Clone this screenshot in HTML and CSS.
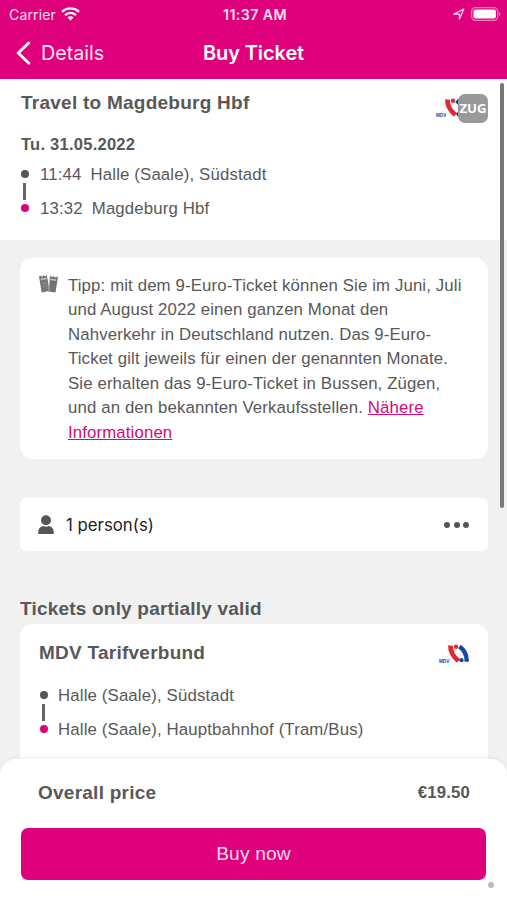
FILE: index.html
```html
<!DOCTYPE html>
<html lang="en">
<head>
<meta charset="utf-8">
<title>Buy Ticket</title>
<link rel="stylesheet" href="styles.css">
</head>
<body>
<div class="app">
  <header class="header">
    <div class="status">
      <div class="carrier"><span>Carrier</span>
        <svg width="19" height="14" viewBox="0 0 19 14" fill="none" stroke="#fff" stroke-width="2.3"><path d="M1.1 4.9a12 12 0 0 1 16.8 0M4.1 8.1a7.7 7.7 0 0 1 10.8 0"/><path d="M6.5 10.5a4.2 4.2 0 0 1 6 0l-3 3z" fill="#fff" stroke="none"/></svg>
      </div>
      <div class="clock">11:37 AM</div>
      <div class="indicators">
        <svg width="12" height="12" viewBox="0 0 12 12" fill="none" stroke="#ffd5ef" stroke-width="1.3" stroke-linejoin="round"><path d="M.9 6.2 10.8 1 6.5 11V6.2z"/></svg>
        <svg width="30" height="14" viewBox="0 0 30 14"><rect x=".7" y=".7" width="26" height="12.6" rx="3.6" fill="none" stroke="#f47fc0" stroke-width="1.2"/><rect x="2.5" y="2.5" width="22.4" height="9" rx="2" fill="#fff"/><path d="M28 4.6q2.6 2.4 0 4.8z" fill="#f47fc0"/></svg>
      </div>
    </div>
    <nav class="navbar">
      <a class="back"><svg width="15" height="24" viewBox="0 0 15 24" fill="none" stroke="#fff" stroke-width="3" stroke-linecap="round" stroke-linejoin="round"><path d="M12.7 2 2.2 12l10.5 10"/></svg><span>Details</span></a>
      <h1 class="title">Buy Ticket</h1>
      <span></span>
    </nav>
  </header>

  <main class="content">
    <section class="trip">
      <div class="trip-head">
        <h2 class="heading trip-title">Travel to Magdeburg Hbf</h2>
        <div class="logos">
          <svg class="mdv" width="30" height="20" viewBox="0 0 30 20"><text x="0" y="18.6" class="mdv-text">MDV</text><path d="M11.5 1.5Q11 10 19.5 17" fill="none" stroke="#e32832" stroke-width="4.8"/><circle cx="17" cy="2.7" r="2.2" fill="#e32832"/><path d="M20.5 2.5Q28.5 8.5 27.5 17.8" fill="none" stroke="#1748a0" stroke-width="4.4"/><circle cx="22.5" cy="16.2" r="2.1" fill="#1748a0"/></svg>
          <span class="zug">ZUG</span>
        </div>
      </div>
      <p class="date">Tu. 31.05.2022</p>
      <div class="route">
        <div class="track"><i class="dot"></i><i class="line"></i><i class="dot pink"></i></div>
        <div class="stops">
          <div class="stop"><span class="time">11:44</span><span class="from">Halle (Saale), Südstadt</span></div>
          <div class="stop"><span class="time">13:32</span><span class="dest">Magdeburg Hbf</span></div>
        </div>
      </div>
    </section>

    <section class="card tip">
      <svg class="ticket" width="20" height="20" viewBox="0 0 20 20"><path d="m0 2.2 2.1-.4 1 1 1.4-1.5 1.6 1 1.7-1.4L10.6 17l-8 1.4z" fill="#777"/><path d="m11.2 1.8 2 1.3 1.6-.9 1.5 1.3 2.7-1-2.5 16.1-7.3-1.2z" fill="#737373"/><path d="m1.8 5.4 5.8-1M11 5.2l6 .9" stroke="#bbb" stroke-width="1.6"/><path d="m3.3 10 4.9-.9M3.7 12.8l5-.9" stroke="#8e8e8e"/><path d="m10.3 3-.3 14" stroke="#ccc" stroke-width=".7"/></svg>
      <p class="tip-text">Tipp: mit dem 9-Euro-Ticket können Sie im Juni, Juli<br>und August 2022 einen ganzen Monat den<br>Nahverkehr in Deutschland nutzen. Das 9-Euro-<br>Ticket gilt jeweils für einen der genannten Monate.<br>Sie erhalten das 9-Euro-Ticket in Bussen, Zügen,<br>und an den bekannten Verkaufsstellen. <a>Nähere<br>Informationen</a></p>
    </section>

    <section class="card persons">
      <svg width="16" height="20" viewBox="0 0 16 20" fill="#555"><circle cx="8" cy="5.2" r="5"/><path d="M.3 19v-1.8c0-3.800 2.700-6 5-6.100 1.700.7 3.700.7 5.400 0 2.300.1 5 2.300 5 6.100v1.800z"/></svg>
      <span class="count">1 person(s)</span>
      <span class="more"><i></i><i></i><i></i></span>
    </section>

    <h2 class="heading partial">Tickets only partially valid</h2>
    <section class="card tariff">
      <div class="tariff-head">
        <h3 class="heading tariff-title">MDV Tarifverbund</h3>
        <svg class="mdv" width="30" height="20" viewBox="0 0 30 20"><text x="0" y="18.6" class="mdv-text">MDV</text><path d="M11.5 1.5Q11 10 19.5 17" fill="none" stroke="#e32832" stroke-width="4.8"/><circle cx="17" cy="2.7" r="2.2" fill="#e32832"/><path d="M20.5 2.5Q28.5 8.5 27.5 17.8" fill="none" stroke="#1748a0" stroke-width="4.4"/><circle cx="22.5" cy="16.2" r="2.1" fill="#1748a0"/></svg>
      </div>
      <div class="route">
        <div class="track"><i class="dot"></i><i class="line"></i><i class="dot pink"></i></div>
        <div class="stops">
          <div class="stop"><span class="from">Halle (Saale), Südstadt</span></div>
          <div class="stop"><span class="via">Halle (Saale), Hauptbahnhof (Tram/Bus)</span></div>
        </div>
      </div>
    </section>
  </main>

  <footer class="checkout">
    <div class="total"><span class="heading total-label">Overall price</span><span class="price">€19.50</span></div>
    <button class="buy">Buy now</button>
  </footer>
  <i class="scrollbar"></i>
  <i class="corner"></i>
</div>
</body>
</html>
```

FILE: styles.css
```css
* { box-sizing: border-box; }
body { margin: 0; background: #f1f1f1; font-family: "Liberation Sans", Arial, sans-serif; color: #585858; }
h1, h2, h3, p { margin: 0; }
i { display: block; }
svg { display: block; flex: none; }
.app { position: relative; width: 507px; height: 900px; overflow: hidden; display: flex; flex-direction: column; }

.header { flex: none; height: 79px; background: #df007b; color: #ffe3f4; font-family: Inter, sans-serif; }
.status { height: 27px; display: grid; grid-template-columns: 1fr auto 1fr; align-items: center; padding: 1px 6px 0 9px; }
.carrier { display: flex; align-items: center; gap: 5px; font-size: 14px; letter-spacing: 0.15px; }
.clock { font-size: 14.2px; font-weight: 600; letter-spacing: 0.4px; }
.indicators { display: flex; justify-content: flex-end; align-items: center; gap: 6px; }
.navbar { height: 51px; display: grid; grid-template-columns: 1fr auto 1fr; align-items: center; padding: 0 16px; }
.back { display: flex; align-items: center; gap: 10px; font-size: 19.7px; }
.title { font-size: 20px; font-weight: 600; color: #fff; letter-spacing: -0.1px; }

.content { flex: 1; min-height: 0; overflow: hidden; }
.heading { font-size: 19px; line-height: 22px; font-weight: 700; white-space: nowrap; letter-spacing: 0.25px; }
.trip { height: 161px; background: #fff; padding: 13px 19px 0 21px; }
.trip-head { display: flex; justify-content: space-between; height: 42px; }
.logos { display: flex; padding-top: 6px; }
.mdv-text { font: 700 4.6px "Liberation Sans", sans-serif; fill: #1748a0; }
.logos .mdv { margin-right: -8px; }
.zug { position: relative; width: 30px; height: 29px; margin-top: -4px; border-radius: 7px; background: #999; color: #fff; font: 700 13.2px/29px "Open Sans", sans-serif; text-align: center; }
.date { font-size: 16.5px; line-height: 21px; font-weight: 700; letter-spacing: 0.25px; }
.route { display: flex; gap: 10px; }
.trip .route { padding-top: 2px; margin-left: -1px; gap: 11px; }
.track { width: 9px; height: 69px; padding-top: 13px; display: flex; flex-direction: column; align-items: center; }
.dot { width: 8px; height: 8px; border-radius: 50%; background: #555; }
.pink { background: #df007b; }
.line { width: 3px; height: 17px; margin: 5px 0 4px; background: #666; }
.stops { padding-top: 1px; }
.stop { height: 34px; line-height: 34px; font-size: 16.8px; letter-spacing: 0.15px; display: flex; gap: 9px; white-space: nowrap; }

.card { margin: 0 19px 0 20px; background: #fff; }
.tip { display: flex; gap: 9px; height: 201px; margin-top: 18px; border-radius: 13px; padding: 16px 0 14px 19px; }
.tip-text { font-size: 16.8px; letter-spacing: 0.13px; line-height: 24.45px; white-space: nowrap; }
.tip-text a { color: #d5087b; text-decoration: underline; }
.persons { display: flex; align-items: center; height: 53px; margin-top: 39px; border-radius: 6px; padding: 0 19px 0 18px; }
.count { margin-left: 12px; font: 16.8px "Inter", sans-serif; color: #222; }
.more { margin-left: auto; display: flex; gap: 3.5px; }
.more i { width: 6px; height: 6px; border-radius: 50%; background: #555; }
.partial { margin: 47px 20px 4px; letter-spacing: 0.2px; }
.tariff { height: 160px; border-radius: 13px 13px 0 0; padding: 18px 19px 0; }
.tariff-head { display: flex; justify-content: space-between; height: 36px; }
.tariff-head .mdv { margin-top: 2px; }

.checkout { position: relative; flex: none; height: 141px; background: #fff; border-radius: 16px 16px 0 0; padding: 22px 21px 0; box-shadow: 0 -1px 5px rgba(0,0,0,.06); }
.total { display: flex; justify-content: space-between; align-items: center; padding: 0 16px 0 17px; height: 23px; }
.price { padding-top: 1px; font-size: 16.8px; font-weight: 700; letter-spacing: 0.15px; }
.buy { display: block; width: 465px; height: 52px; margin-top: 24px; padding: 0 0 1px; border: 0; border-radius: 7px; background: #df007b; color: #ffd9ef; font: 19.2px "Liberation Sans", sans-serif; letter-spacing: 0.15px; }
.scrollbar { position: absolute; top: 83px; right: 3px; width: 4px; height: 425px; border-radius: 2px; background: #777; }
.corner { position: absolute; right: 13px; bottom: 12px; width: 6px; height: 6px; border-radius: 50%; background: #bbb; }
```
